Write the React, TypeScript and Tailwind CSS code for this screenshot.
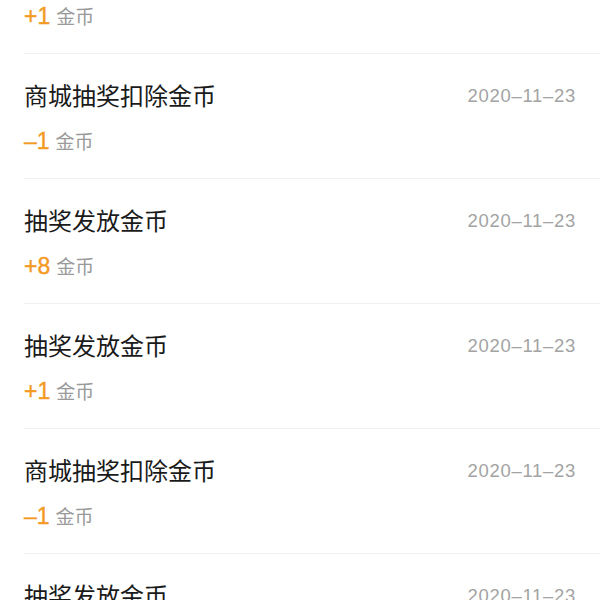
import React from "react";

type Item = { title: string; amount: string; date: string };

const items: Item[] = [
  { title: "抽奖发放金币", amount: "+1", date: "2020–11–23" },
  { title: "商城抽奖扣除金币", amount: "–1", date: "2020–11–23" },
  { title: "抽奖发放金币", amount: "+8", date: "2020–11–23" },
  { title: "抽奖发放金币", amount: "+1", date: "2020–11–23" },
  { title: "商城抽奖扣除金币", amount: "–1", date: "2020–11–23" },
  { title: "抽奖发放金币", amount: "+1", date: "2020–11–23" },
];

const cjk = { fontFamily: '"Noto Sans CJK SC", "Noto Sans", sans-serif' };
const latin = { fontFamily: '"Liberation Sans", Arial, "Noto Sans CJK SC", sans-serif' };

export default function App() {
  return (
    <div className="h-[600px] w-[600px] overflow-hidden bg-white">
      <div className="-mt-[71px]">
        {items.map((it, i) => (
          <div key={i} className="ml-6 border-b border-[#f0f0f0] pr-6 pt-[26px] pb-[22px]">
            <div className="flex items-start justify-between">
              <div className="text-[24px] leading-[30px] text-[#1a1a1a]" style={cjk}>
                {it.title}
              </div>
              <div
                className="pt-[4px] text-[18.5px] leading-[24px] tracking-[0.7px] text-[#a3a3a3]"
                style={latin}
              >
                {it.date}
              </div>
            </div>
            <div className="mt-[16px] flex h-[30px] items-baseline">
              <span
                className="text-[23px] leading-[30px] font-medium text-[#f39a25] [-webkit-text-stroke:0.4px_#f39a25]"
                style={latin}
              >
                {it.amount}
              </span>
              <span className="ml-1.5 text-[19px] leading-[30px] text-[#9a9a9a]" style={cjk}>
                金币
              </span>
            </div>
          </div>
        ))}
      </div>
    </div>
  );
}
